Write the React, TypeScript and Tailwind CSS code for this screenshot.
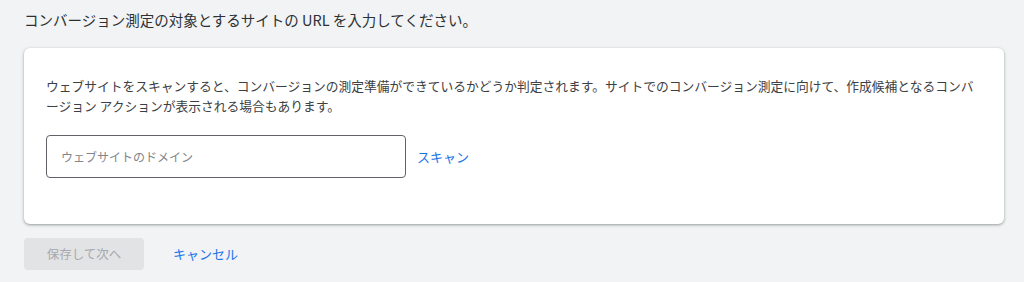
export default function App() {
  return (
    <div
      className="min-h-screen bg-[#f1f3f4] pl-6 pr-5 pt-[10px] text-[#3c4043]"
      style={{ fontFamily: "'Noto Sans CJK JP', 'Noto Sans', sans-serif" }}
    >
      {/* Heading */}
      <h1 className="text-[14.5px] leading-5 text-[#2d3033]">
        コンバージョン測定の対象とするサイトの URL を入力してください。
      </h1>

      {/* Card */}
      <div className="mt-[18px] rounded-md bg-white pl-[22px] pr-2 pt-7 pb-[46px] shadow-[0_1px_2px_rgba(60,64,67,0.3),0_1px_3px_1px_rgba(60,64,67,0.15)]">
        <p className="whitespace-nowrap text-[12.75px] leading-5 text-[#3c4043]">
          ウェブサイトをスキャンすると、コンバージョンの測定準備ができているかどうか判定されます。サイトでのコンバージョン測定に向けて、作成候補となるコンバ
          <br />
          ージョン アクションが表示される場合もあります。
        </p>
        <div className="mt-[19px] flex items-center">
          <input
            type="text"
            placeholder="ウェブサイトのドメイン"
            className="h-[43px] w-[360px] rounded-[4px] border border-[#5f6368] bg-white px-[14px] text-[12px] text-[#202124] outline-none placeholder:text-[#80868b]"
          />
          <button className="ml-[11px] text-[13px] text-[#1a73e8]">スキャン</button>
        </div>
      </div>

      {/* Actions */}
      <div className="mt-[14px] flex items-center">
        <button className="h-8 w-[120px] rounded-[4px] bg-[#e2e3e5] text-[12.5px] text-[#a6a9ad]">
          保存して次へ
        </button>
        <button className="ml-[29px] text-[13px] text-[#1a73e8]">キャンセル</button>
      </div>
    </div>
  );
}
